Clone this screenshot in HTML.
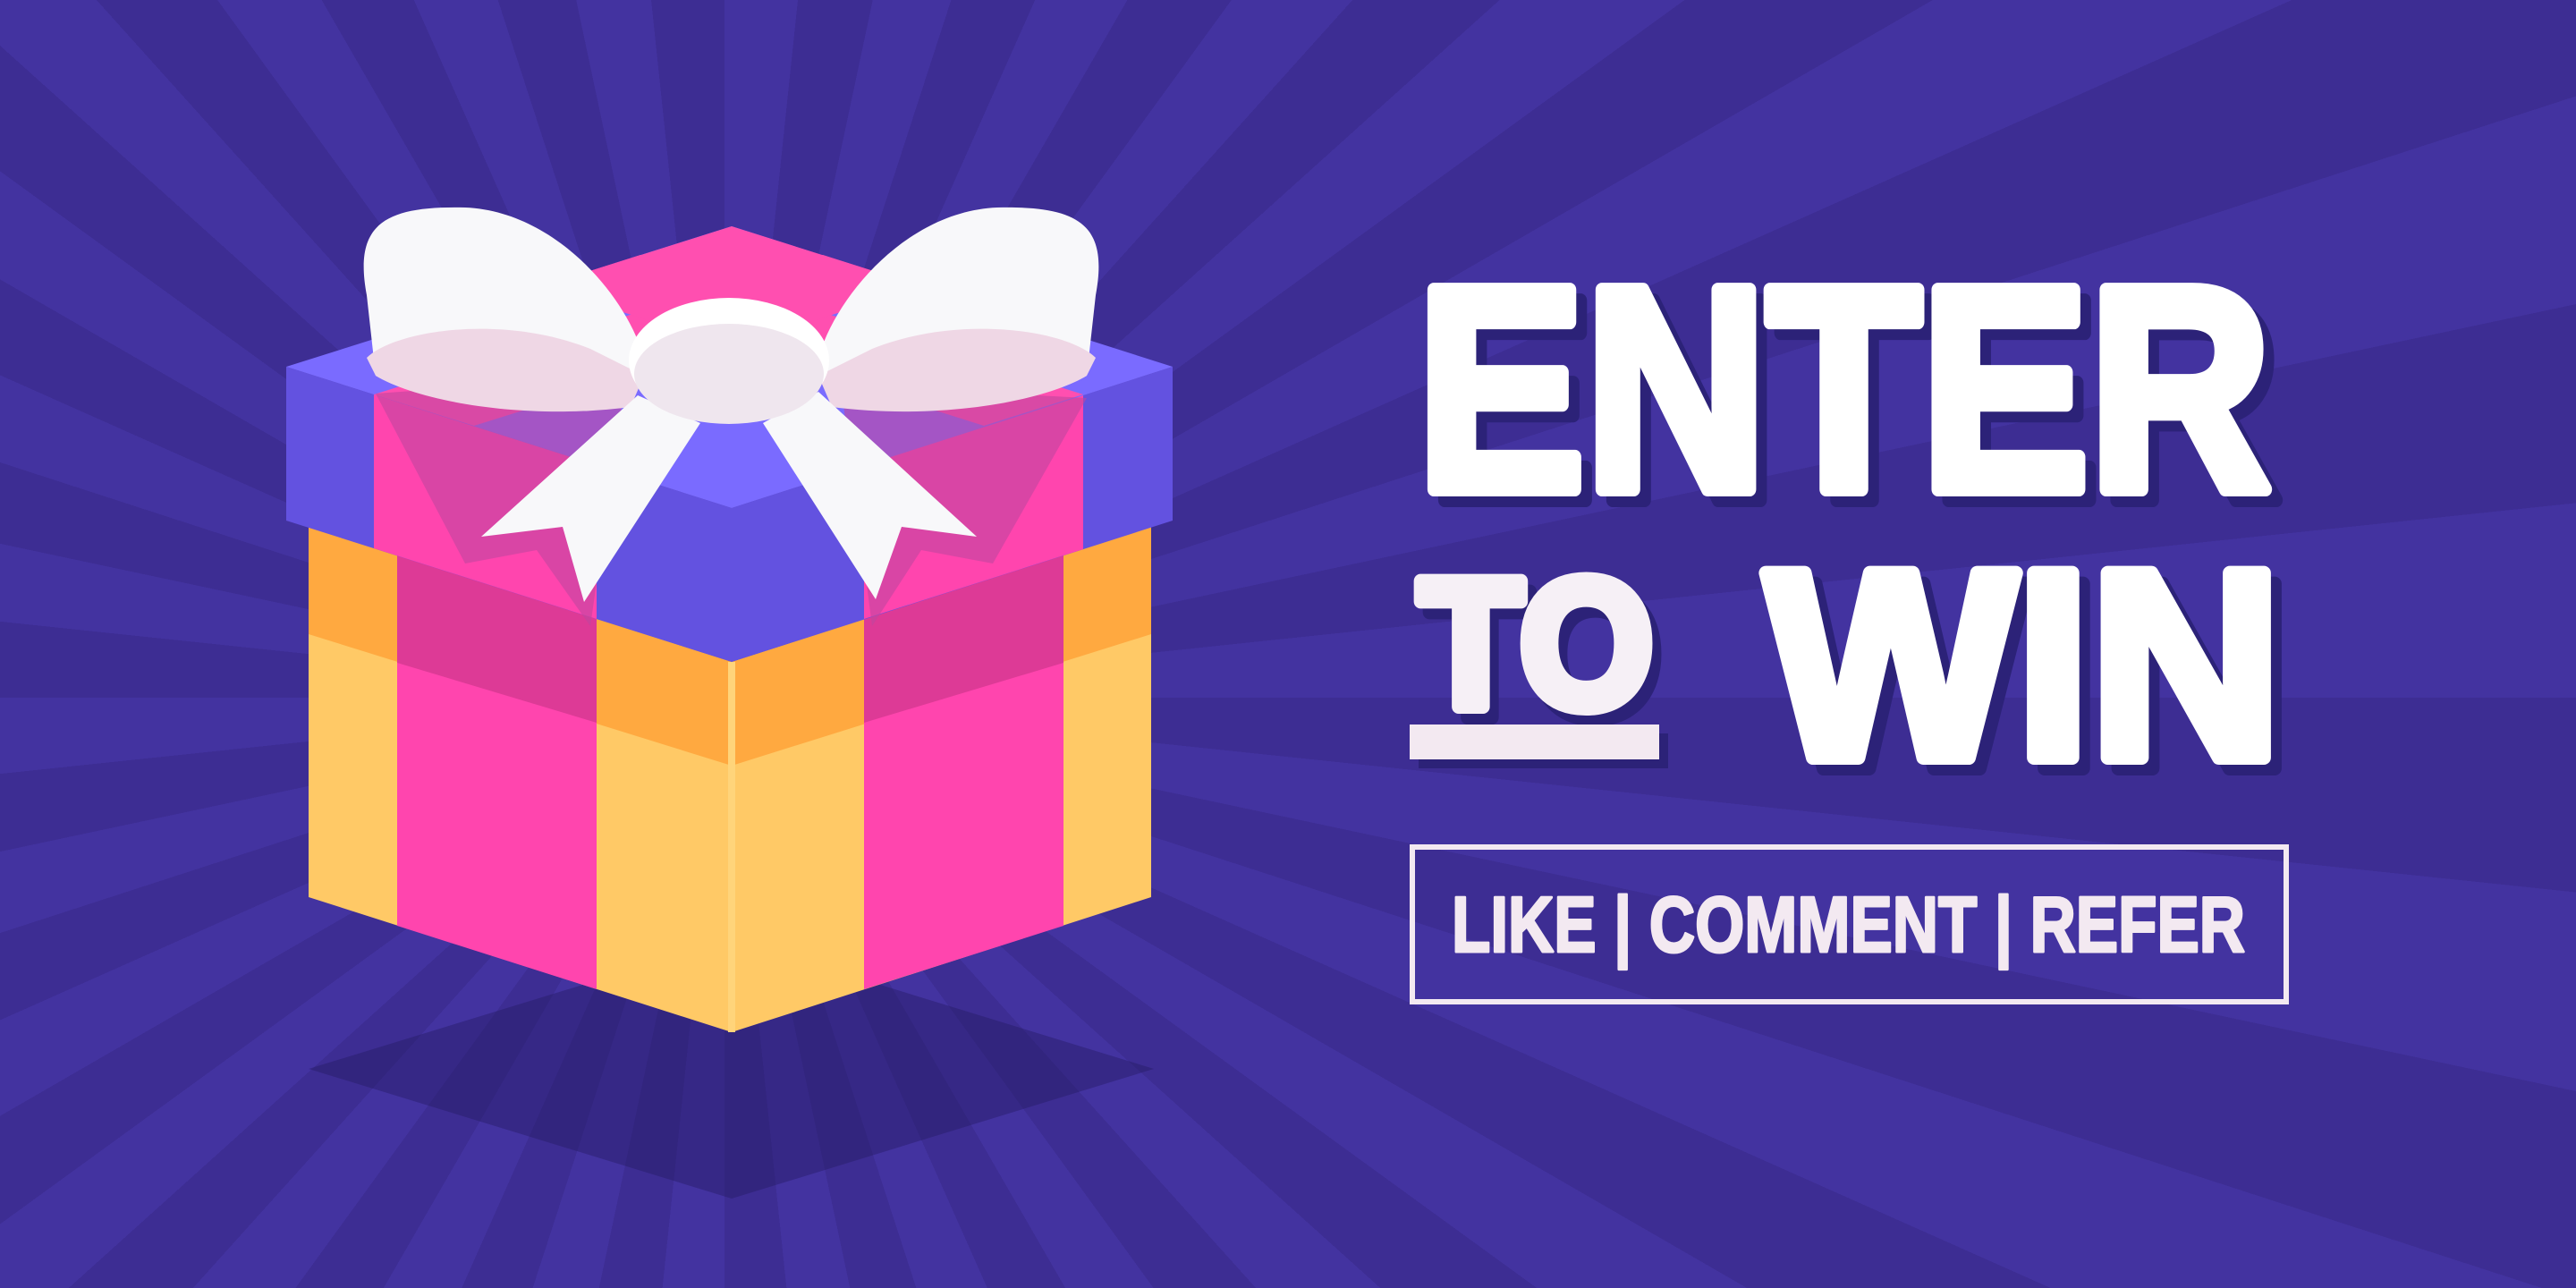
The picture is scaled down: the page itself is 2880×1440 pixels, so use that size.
<!DOCTYPE html>
<html><head><meta charset="utf-8"><style>
html,body{margin:0;padding:0;}
body{width:2880px;height:1440px;overflow:hidden;background:#3f2f97;
background:repeating-conic-gradient(from 0deg at 810px 780px,#4333a0 0deg 6deg,#3d2d93 6deg 12deg);}
svg{position:absolute;left:0;top:0}
text{font-family:"Liberation Sans",sans-serif;font-weight:bold;stroke-linejoin:round;}
</style></head><body>
<svg width="2880" height="1440" viewBox="0 0 2880 1440">
<polygon points="345,1195 818,1050 1290,1195 818,1340" fill="#24195e" opacity="0.4"/>
<polygon points="345,589 818,740 1287,589 1287,1003 818,1154 345,1003" fill="#ffc966"/>
<polygon points="345,589 818,740 1287,589 1287,709 818,856 345,709" fill="#ffa940"/>
<polygon points="444,620 667,692 667,1106 444,1035" fill="#ff45ae"/>
<polygon points="966,692 1189,620 1189,1035 966,1106" fill="#ff45ae"/>
<polygon points="444,620 667,692 667,808 444,741" fill="#dd3a96"/>
<polygon points="966,692 1189,620 1189,741 966,808" fill="#dd3a96"/>
<line x1="818" y1="740" x2="818" y2="1154" stroke="#ffd47a" stroke-width="8"/>
<polygon points="320,410 818,568 1311,410 1311,582 818,740 320,582" fill="#6352e0"/>
<polygon points="418,441 667,520 667,692 418,613" fill="#ff45ae"/>
<polygon points="966,520 1211,441 1211,614 966,692" fill="#ff45ae"/>
<polygon points="320,410 818,253 1311,410 818,568" fill="#7a6bff"/>
<polygon points="418,441 920,285 1030,320 530,476" fill="#ff4fb0"/>
<polygon points="716,285 1211,441 1100,476 606,320" fill="#ff4fb0"/>
<polygon points="606,320 818,253 1030,320 818,388" fill="#ff4fb0"/>
<polygon points="420,440 700,420 660,700 600,615 520,630" fill="#c0469e" opacity="0.6"/>
<polygon points="940,430 1215,445 1110,630 1030,615 975,700" fill="#c0469e" opacity="0.6"/>
<path d="M410,330 C395,250 430,230 520,232 C620,236 700,330 720,400 L705,450 C600,470 470,450 420,420 Z" fill="#f8f8fa"/>
<path d="M410,400 C440,370 560,350 660,390 L720,420 L705,455 C590,470 470,450 420,420 Z" fill="#efd7e5"/>
<path d="M1225,330 C1240,250 1205,230 1115,232 C1015,236 935,330 915,400 L930,450 C1035,470 1165,450 1215,420 Z" fill="#f8f8fa"/>
<path d="M1225,400 C1195,370 1075,350 975,390 L915,420 L930,455 C1045,470 1165,450 1215,420 Z" fill="#efd7e5"/>
<polygon points="713,442 538,600 629,589 653,673 783,473" fill="#f8f8fa"/>
<polygon points="853,473 979,670 1008,589 1092,600 915,438" fill="#f8f8fa"/>
<ellipse cx="815" cy="403" rx="112" ry="70" fill="#ffffff"/>
<ellipse cx="815" cy="418" rx="106" ry="56" fill="#efe6ee"/>

<g fill="#2c2278" stroke="#2c2278" stroke-width="16">
<text x="1596" y="559" font-size="324" textLength="955" lengthAdjust="spacingAndGlyphs">ENTER</text>
<text x="1986" y="859" font-size="300" textLength="577" lengthAdjust="spacingAndGlyphs">WIN</text>
<text x="1596" y="802" font-size="204" textLength="262" lengthAdjust="spacingAndGlyphs">TO</text>
</g>
<rect x="1586" y="820" width="279" height="39" fill="#2c2278"/>
<g fill="#ffffff" stroke="#ffffff" stroke-width="16">
<text x="1584" y="547" font-size="324" textLength="955" lengthAdjust="spacingAndGlyphs">ENTER</text>
<text x="1974" y="847" font-size="300" textLength="577" lengthAdjust="spacingAndGlyphs">WIN</text>
<text x="1586" y="790" font-size="204" textLength="262" lengthAdjust="spacingAndGlyphs" fill="#f6f0f6" stroke="#f6f0f6">TO</text>
</g>
<rect x="1576" y="810" width="279" height="39" fill="#f3e9f1"/>
<rect x="1579" y="947" width="977" height="173" fill="none" stroke="#f3e9f1" stroke-width="6"/>
<text x="1623" y="1064" font-size="88" fill="#f3e9f1" stroke="#f3e9f1" stroke-width="3" textLength="887" lengthAdjust="spacingAndGlyphs">LIKE | COMMENT | REFER</text>
</svg>
</body></html>
